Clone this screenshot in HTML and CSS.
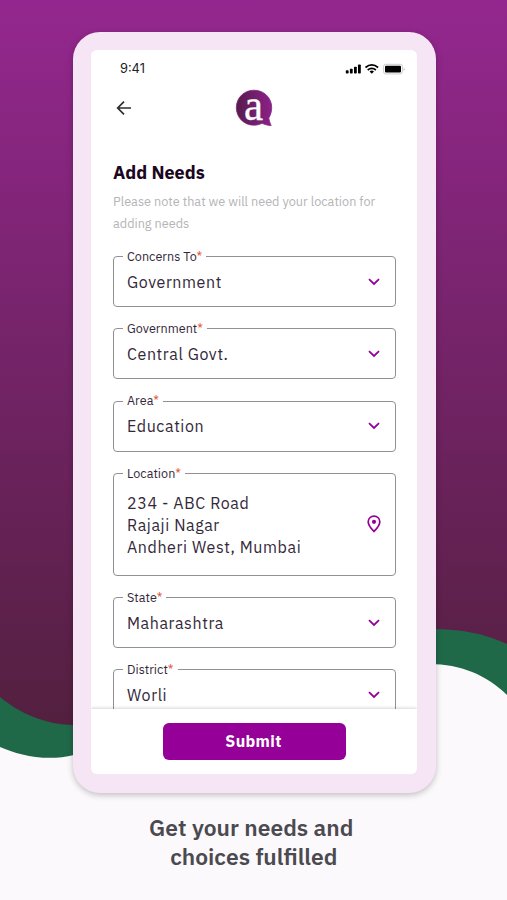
FILE: index.html
```
<!DOCTYPE html>
<html lang="en">
<head>
<meta charset="utf-8">
<title>Add Needs</title>
<link rel="stylesheet" href="styles.css">
</head>
<body>
<main class="page">
  <svg class="backdrop" viewBox="0 0 507 900" aria-hidden="true">
    <defs>
      <linearGradient id="sky" x1="0" y1="0" x2="0" y2="1">
        <stop offset="0" stop-color="#94278f"/>
        <stop offset="1" stop-color="#53203f"/>
      </linearGradient>
    </defs>
    <rect width="507" height="900" fill="#fcf9fd"/>
    <path fill="#1f6848" d="M0 600H507V695C487 675 460 664 430 664L250 710L74 755C46 762 18 755 0 747Z"/>
    <path fill="url(#sky)" d="M0 0H507V644C485 634 462 629 430 629L250 690L74 725C46 725 19 713 0 697Z"/>
  </svg>
  <section class="phone">
    <div class="screen">
      <div class="status">
        <span class="time">9:41</span>
        <svg class="signals" viewBox="0 0 60 12" aria-hidden="true">
          <g fill="#000">
            <rect x="0.8" y="7.3" width="2.8" height="3.2" rx=".8"/>
            <rect x="4.9" y="5.7" width="2.8" height="4.8" rx=".8"/>
            <rect x="9" y="3.7" width="2.8" height="6.8" rx=".8"/>
            <rect x="13" y="1.5" width="2.8" height="9" rx=".8"/>
            <rect x="40" y="2.7" width="16" height="6.8" rx="1"/>
          </g>
          <g fill="none" stroke="#000" stroke-width="1.7">
            <path d="M20.5 4.5Q26.8-.6 33.1 4.5M22.7 7Q26.8 3.6 30.9 7"/>
          </g>
          <path d="M24.6 8.4Q26.8 6.7 29 8.4L26.8 10.8Z"/>
          <rect x="38.6" y="1.3" width="18.8" height="9.6" rx="2" fill="none" stroke="#ccc"/>
          <path d="M58.6 4.7v3q1-.4 1-1.5t-1-1.5" fill="#bbb"/>
        </svg>
      </div>
      <header class="bar">
        <svg class="back" viewBox="0 0 16 16" aria-hidden="true"><path d="M15 8H2M8 1.7L1.7 8L8 14.3"/></svg>
        <div class="logo">
          <svg viewBox="0 0 38 38" aria-hidden="true">
            <defs><linearGradient id="mark"><stop offset="0" stop-color="#571c4b"/><stop offset="1" stop-color="#8c218a"/></linearGradient></defs>
            <path fill="url(#mark)" stroke="#83267c" stroke-width=".8" d="M19 1.2C29 1.2 36.7 8.8 36.7 18.5C36.7 22.5 35.6 26 33.8 29C34.1 31.8 35.2 34.4 36.2 36.6C32.5 36.5 29.5 35.4 27 34.3C24.4 35.6 21.8 36.2 19 36.2C9 36.2 1.3 28.5 1.3 18.7C1.3 8.8 9 1.2 19 1.2Z"/>
          </svg>
          <span>a</span>
        </div>
      </header>
      <div class="form">
        <h1>Add Needs</h1>
        <p class="note">Please note that we will need your location for<br>adding needs</p>
        <div class="field"><label>Concerns To<i>*</i></label><span>Government</span><svg class="chev" viewBox="0 0 12 8"><path d="M1 1.2L6 6L11 1.2"/></svg></div>
        <div class="field"><label>Government<i>*</i></label><span>Central Govt.</span><svg class="chev" viewBox="0 0 12 8"><path d="M1 1.2L6 6L11 1.2"/></svg></div>
        <div class="field"><label>Area<i>*</i></label><span>Education</span><svg class="chev" viewBox="0 0 12 8"><path d="M1 1.2L6 6L11 1.2"/></svg></div>
        <div class="field tall"><label>Location<i>*</i></label>
          <div class="address"><span>234 - ABC Road</span><span>Rajaji Nagar</span><span>Andheri West, Mumbai</span></div>
          <svg class="pin" viewBox="0 0 14 18"><path d="M7 1.1C3.7 1.1 1.2 3.6 1.2 6.8C1.2 10.8 4.6 14 7 16.5C9.4 14 12.8 10.8 12.8 6.8C12.8 3.6 10.3 1.1 7 1.1Z"/><circle cx="7" cy="6.8" r="2.1"/></svg>
        </div>
        <div class="field"><label>State<i>*</i></label><span>Maharashtra</span><svg class="chev" viewBox="0 0 12 8"><path d="M1 1.2L6 6L11 1.2"/></svg></div>
        <div class="field"><label>District<i>*</i></label><span>Worli</span><svg class="chev" viewBox="0 0 12 8"><path d="M1 1.2L6 6L11 1.2"/></svg></div>
      </div>
      <footer class="actions"><button type="button">Submit</button></footer>
    </div>
  </section>
  <h2 class="caption">Get your needs and<br><span>choices fulfilled</span></h2>
</main>
</body>
</html>
```
FILE: styles.css
```
* { box-sizing: border-box; }
body { margin: 0; font-family: "IBM Plex Sans", "Noto Sans", sans-serif; color: #33283a; }
.page { position: relative; width: 507px; height: 900px; overflow: hidden; display: flex; flex-direction: column; align-items: center; padding: 31.5px 0 0 1.5px; }
.backdrop { position: absolute; inset: 0; width: 507px; height: 900px; }
.phone { position: relative; width: 362.5px; height: 761.5px; padding: 18.5px 18px; border-radius: 27px; background: #f6e5f4; box-shadow: 0 2px 6px rgba(0,0,0,.24); }
.screen { height: 724px; width: 326px; background: #fff; border-radius: 6px; overflow: hidden; display: flex; flex-direction: column; }
.status { height: 36px; flex: none; display: flex; justify-content: space-between; align-items: center; padding: 1px 12px 0 29px; }
.time { font-family: Inter, sans-serif; font-size: 12.8px; font-weight: 400; color: #222; }
.signals { width: 60px; height: 12px; }
.bar { flex: none; height: 44px; display: grid; grid-template-columns: 1fr 38px 1fr; align-items: center; padding: 0 25px; }
.back { width: 16px; height: 16px; fill: none; stroke: #302d32; stroke-width: 1.7; }
.logo { position: relative; width: 38px; height: 38px; }
.logo svg { width: 38px; height: 38px; display: block; }
.logo span { position: absolute; left: 0; top: -3px; width: 37px; text-align: center; color: #fff; font: 43px/38px "Liberation Serif", serif; -webkit-text-stroke: .3px #fff; transform: scaleY(1.05); }
.form { flex: 1; min-height: 0; overflow: hidden; padding: 32.5px 21.5px 0 22px; }
h1 { margin: 0; font-size: 18px; line-height: 20px; font-weight: 700; color: #1b0720; }
.note { margin: 7.5px 0 22px; font-size: 12.7px; line-height: 22px; color: #b5b4b6; white-space: nowrap; }
.field { position: relative; height: 51px; margin-bottom: 21.4px; padding: 0 15px 0 13px; border: 1px solid #929094; border-radius: 4px; display: flex; align-items: center; justify-content: space-between; font-size: 16px; line-height: 21.8px; letter-spacing: .6px; white-space: nowrap; }
.field > span { padding-top: 2px; }
.field label { position: absolute; left: 9px; top: -9.5px; padding: 0 4px; background: #fff; font-size: 12.6px; line-height: 16px; letter-spacing: .03px; }
.field i { color: #e2573d; font-style: normal; }
.tall { height: 102.5px; }
.address { display: flex; flex-direction: column; padding-top: 3px; }
.chev { width: 12px; height: 8px; fill: none; stroke: #950098; stroke-width: 1.8; }
.pin { width: 14px; height: 18px; margin-right: -1px; fill: none; stroke: #950098; stroke-width: 1.7; }
.pin circle { fill: #950098; stroke: none; }
.actions { flex: none; height: 65px; padding-top: 14px; display: flex; justify-content: center; align-items: flex-start; background: #fff; box-shadow: 0 -1px 3px rgba(0,0,0,.16); position: relative; }
button { width: 183px; height: 36.5px; border: 0; border-radius: 6px; background: #950098; color: #fff; font: 700 16px/22px "IBM Plex Sans", "Noto Sans", sans-serif; letter-spacing: .35px; padding: 0 1px 0 0; }
.caption { position: relative; margin: 20px 0 0; padding-right: 6px; text-align: center; font-size: 22.8px; line-height: 29px; font-weight: 600; color: #4b4a4f; }
.caption span { padding-left: 5px; }
```
